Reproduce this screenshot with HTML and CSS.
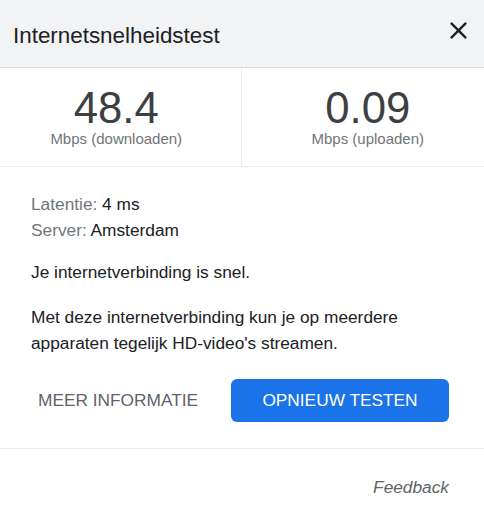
FILE: index.html
```html
<!DOCTYPE html>
<html lang="nl">
<head>
    <meta charset="UTF-8">
    <meta name="viewport" content="width=device-width, initial-scale=1.0">
    <title>Internetsnelheidstest</title>
    <link rel="stylesheet" href="styles.css">
</head>
<body>
    <div class="header">
        <h1 class="title">Internetsnelheidstest</h1>
        <button class="close" aria-label="Sluiten">
            <svg viewBox="0 0 24 24" width="29" height="29"><path d="M19 6.41L17.59 5 12 10.59 6.41 5 5 6.41 10.59 12 5 17.59 6.41 19 12 13.41 17.59 19 19 17.59 13.41 12z" fill="#202124"/></svg>
        </button>
    </div>

    <div class="stats">
        <div class="stat left">
            <div class="num">48.4</div>
            <div class="unit">Mbps (downloaden)</div>
        </div>
        <div class="stat right">
            <div class="num">0.09</div>
            <div class="unit">Mbps (uploaden)</div>
        </div>
    </div>

    <div class="info">
        <div class="line"><span class="label">Latentie:</span> 4 ms</div>
        <div class="line"><span class="label">Server:</span> Amsterdam</div>
        <p class="msg">Je internetverbinding is snel.</p>
        <p class="msg">Met deze internetverbinding kun je op meerdere apparaten tegelijk HD-video's streamen.</p>

        <div class="actions">
            <button class="more">MEER INFORMATIE</button>
            <button class="retest">OPNIEUW TESTEN</button>
        </div>
    </div>

    <div class="footer">
        <a class="feedback" href="#">Feedback</a>
    </div>
</body>
</html>
```

FILE: styles.css
```css
body{
    margin: 0;
    font-family: "Liberation Sans", Arial, sans-serif;
    background: #fff;
    color: #202124;
}
button{
    font-family: inherit;
    border: none;
    background: none;
    cursor: pointer;
}

.header{
    height: 67px;
    background: #f1f3f4;
    border-bottom: 1px solid #dadce0;
    display: flex;
    justify-content: space-between;
    align-items: flex-start;
}
.title{
    margin: 23px 0 0 13px;
    font-size: 22.4px;
    font-weight: normal;
    line-height: 26px;
    color: #202124;
}
.close{
    margin: 16px 11px 0 0;
    padding: 0;
    width: 29px;
    height: 29px;
}
.close svg{
    display: block;
}

.stats{
    display: flex;
    height: 98px;
    border-bottom: 1px solid #ebebeb;
}
.stat{
    flex: 1;
    text-align: center;
    padding-top: 18px;
}
.stat.left{
    border-right: 1px solid #ebebeb;
    padding-right: 8px;
}
.stat.right{
    padding-left: 10px;
}
.num{
    font-size: 43.7px;
    line-height: 44px;
    color: #3c4043;
}
.unit{
    font-size: 15px;
    line-height: 18px;
    color: #70757a;
}

.info{
    padding: 24px 35px 26px 31px;
    font-size: 17.3px;
    line-height: 26px;
}
.label{
    color: #70757a;
}
.msg{
    margin: 16px 0 0 0;
}
.msg + .msg{
    margin-top: 19px;
}

.actions{
    display: flex;
    justify-content: space-between;
    align-items: center;
    margin-top: 23px;
}
.more{
    font-size: 17.3px;
    color: #5f6368;
    padding: 0 7px;
    height: 43px;
}
.retest{
    font-size: 17.3px;
    color: #fff;
    background: #1a73e8;
    border-radius: 6px;
    height: 43px;
    width: 218px;
    padding: 0;
}

.footer{
    border-top: 1px solid #e8eaed;
    text-align: right;
    padding: 28px 35px 0 0;
}
.feedback{
    font-size: 17.3px;
    font-style: italic;
    color: #5f6368;
    text-decoration: none;
}
```
